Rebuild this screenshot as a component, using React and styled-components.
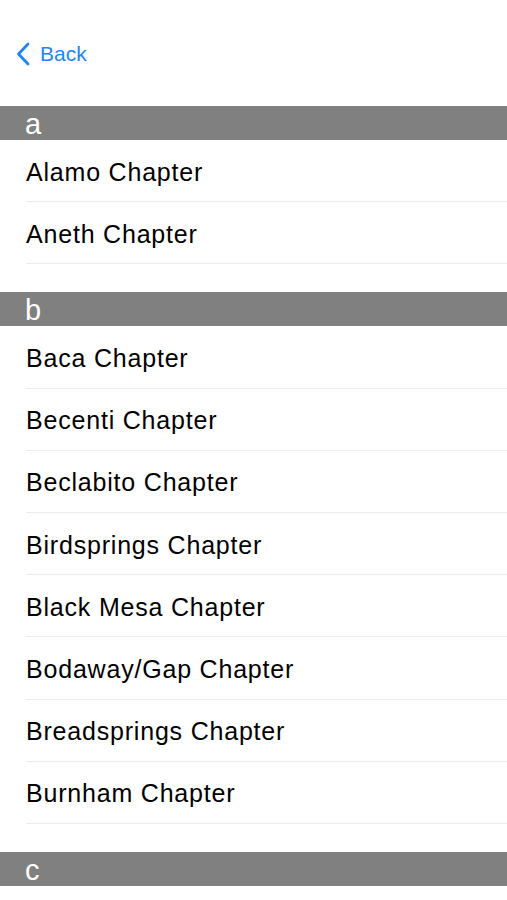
import styled, { createGlobalStyle } from "styled-components";

const GlobalStyle = createGlobalStyle`
  body {
    margin: 0;
    background: #ffffff;
    font-family: "Liberation Sans", Arial, sans-serif;
  }
`;

const Page = styled.div`
  width: 507px;
  height: 900px;
  overflow: hidden;
  background: #fff;
`;

const NavBar = styled.div`
  height: 106px;
  display: flex;
  align-items: center;
  padding-left: 16px;
  box-sizing: border-box;
`;

const BackButton = styled.button`
  display: flex;
  align-items: center;
  gap: 10px;
  background: none;
  border: none;
  padding: 0;
  margin-top: 1px;
  color: #1f86f0;
  font-family: "Liberation Sans", Arial, sans-serif;
  font-size: 21px;
  cursor: pointer;
`;

const Section = styled.section`
  margin-bottom: 28px;
`;

const SectionHeader = styled.div`
  height: 34px;
  line-height: 36px;
  background: #808080;
  color: #fff;
  font-size: 29px;
  padding-left: 25px;
  overflow: hidden;
`;

const Row = styled.div`
  height: 62.2px;
  display: flex;
  align-items: center;
  padding-top: 3px;
  margin-left: 26px;
  border-bottom: 1px solid #ececec;
  box-sizing: border-box;
  font-size: 25px;
  letter-spacing: 0.8px;
  color: #000;
`;

const sections = [
  { letter: "a", items: ["Alamo Chapter", "Aneth Chapter"] },
  {
    letter: "b",
    items: [
      "Baca Chapter",
      "Becenti Chapter",
      "Beclabito Chapter",
      "Birdsprings Chapter",
      "Black Mesa Chapter",
      "Bodaway/Gap Chapter",
      "Breadsprings Chapter",
      "Burnham Chapter",
    ],
  },
  { letter: "c", items: [] },
];

function Chevron() {
  return (
    <svg width="14" height="24" viewBox="0 0 14 24">
      <path
        d="M12 2 L2.5 12 L12 22"
        fill="none"
        stroke="currentColor"
        strokeWidth="2.8"
        strokeLinecap="round"
        strokeLinejoin="round"
      />
    </svg>
  );
}

export default function App() {
  return (
    <Page>
      <GlobalStyle />
      <NavBar>
        <BackButton>
          <Chevron />
          <span>Back</span>
        </BackButton>
      </NavBar>
      {sections.map((s) => (
        <Section key={s.letter}>
          <SectionHeader>{s.letter}</SectionHeader>
          {s.items.map((name) => (
            <Row key={name}>{name}</Row>
          ))}
        </Section>
      ))}
    </Page>
  );
}
